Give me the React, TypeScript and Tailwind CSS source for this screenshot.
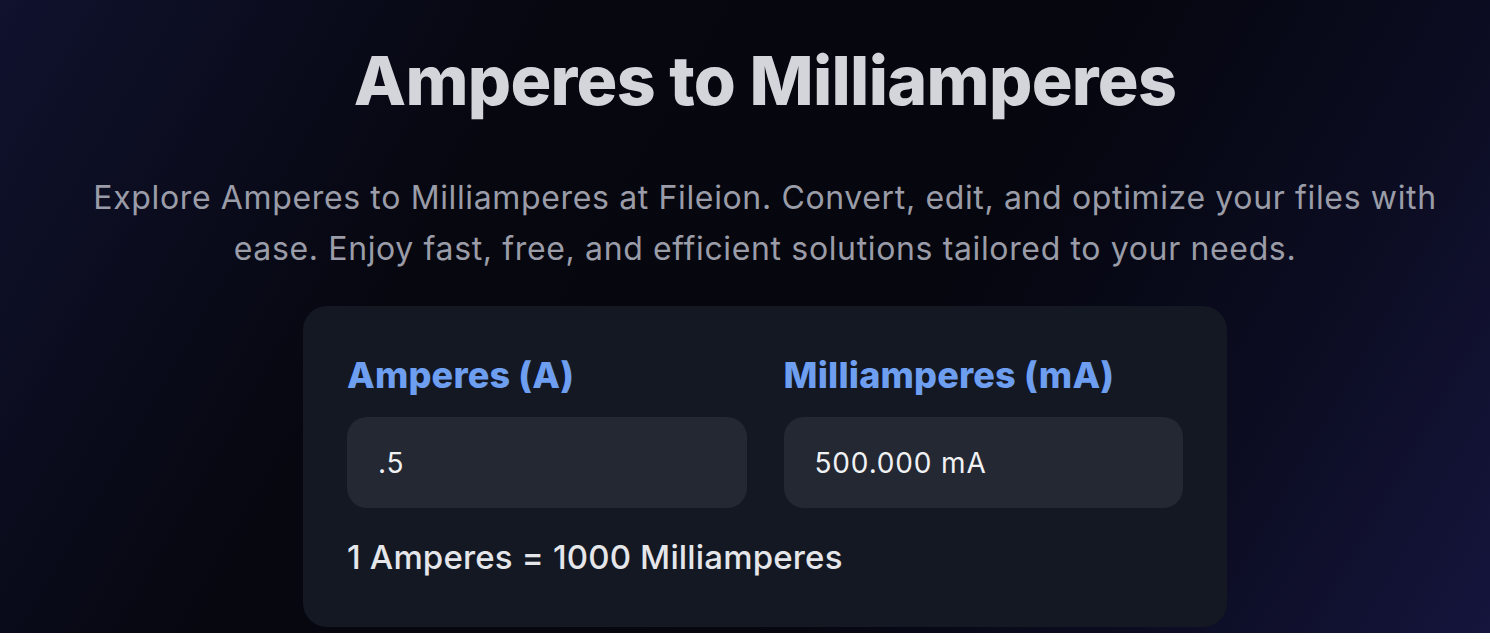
import React from "react";

export default function App() {
  return (
    <div className="w-[1490px] h-[644px] bg-white overflow-hidden" style={{ fontFamily: "Inter, 'Noto Sans', sans-serif" }}>
      <div className="h-[633px] pl-[40px] bg-[linear-gradient(120deg,#10122e_0%,#06070f_30%,#05060e_60%,#0b0c20_80%,#15153d_100%)] flex flex-col items-center">
        <h1 className="mt-[40px] text-[68px] leading-[80px] font-extrabold tracking-[-0.01em] text-[#d4d5da]">
          Amperes to Milliamperes
        </h1>
        <p className="mt-[52px] w-[1380px] text-center text-[32px] leading-[51px] tracking-[0.02em] text-[#9a9ca8]">
          Explore Amperes to Milliamperes at Fileion. Convert, edit, and optimize your files with ease. Enjoy fast, free, and efficient solutions tailored to your needs.
        </p>
        <div className="mt-[32px] w-[924px] h-[321px] rounded-[24px] bg-[#131823] px-[44px] pt-[45px]">
          <div className="grid grid-cols-2 gap-[37px]">
            <div>
              <div className="text-[36px] leading-[48px] font-extrabold tracking-[0.005em] text-[#6d9ef0]">Amperes (A)</div>
              <div className="mt-[18px] h-[91px] rounded-[20px] bg-[#232833] px-[31px] flex items-center text-[28px] tracking-[0.03em] text-[#f0f1f3]">.5</div>
            </div>
            <div>
              <div className="text-[36px] leading-[48px] font-extrabold tracking-[0.005em] text-[#6d9ef0]">Milliamperes (mA)</div>
              <div className="mt-[18px] h-[91px] rounded-[20px] bg-[#232833] px-[31px] flex items-center text-[28px] tracking-[0.03em] text-[#f0f1f3]">500.000 mA</div>
            </div>
          </div>
          <div className="mt-[27px] text-[33px] leading-[44px] font-medium tracking-[0.005em] text-[#e5e6ea]">1 Amperes = 1000 Milliamperes</div>
        </div>
      </div>
    </div>
  );
}
